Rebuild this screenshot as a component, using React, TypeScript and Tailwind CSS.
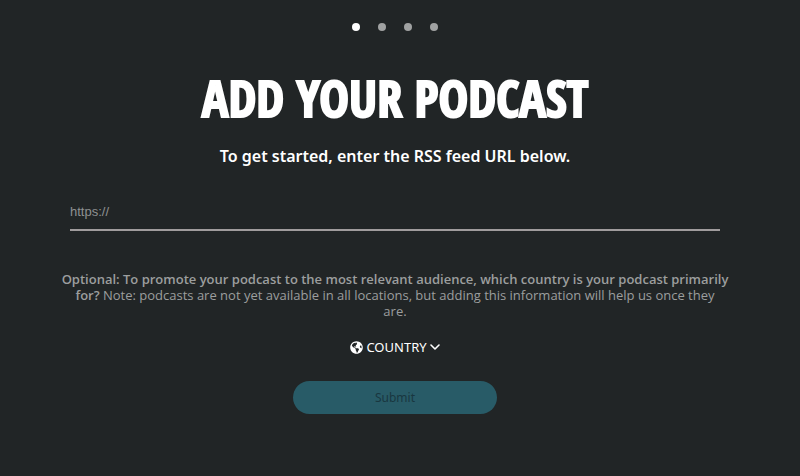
import { FaGlobeAmericas } from "react-icons/fa";

const steps = ["RSS feed", "Verify", "Details", "Finish"];

function StepDots({ current }: { current: number }) {
  return (
    <ol className="flex justify-center gap-[18px]">
      {steps.map((step, i) => (
        <li
          key={step}
          aria-label={step}
          aria-current={i === current ? "step" : undefined}
          className={i === current ? "size-2 rounded-full bg-white" : "size-2 rounded-full bg-[#a0a2a2]"}
        />
      ))}
    </ol>
  );
}

function CountrySelect() {
  return (
    <div className="flex items-center gap-[3px] text-white">
      <FaGlobeAmericas className="size-[13px]" aria-hidden="true" />
      <select
        aria-label="Country"
        className="field-sizing-content cursor-pointer appearance-none bg-transparent text-[13px] leading-5 outline-none"
      >
        <option>COUNTRY</option>
      </select>
      <svg viewBox="0 0 10 10" className="size-[10px]" fill="none" stroke="currentColor" strokeWidth="1.6" aria-hidden="true">
        <path d="M1 3l4 4 4-4" strokeLinecap="round" strokeLinejoin="round" />
      </svg>
    </div>
  );
}

export default function App() {
  return (
    <main className="min-h-screen bg-[#212526] pt-[23px] pr-20 pb-8 pl-[70px] font-['Noto_Sans',sans-serif] text-white">
      <StepDots current={0} />
      <form className="flex flex-col items-center text-center" onSubmit={(e) => e.preventDefault()}>
        <h1 className="mt-[35px] font-['Open_Sans_Condensed','Roboto_Condensed',sans-serif] text-[50px] leading-16 font-bold whitespace-nowrap [-webkit-text-stroke:2px_white]">
          ADD YOUR PODCAST
        </h1>
        <label htmlFor="feed" className="mt-[14px] text-base leading-6 font-semibold">
          To get started, enter the RSS feed URL below.
        </label>
        <input
          id="feed"
          type="url"
          placeholder="https://"
          className="mt-[25px] h-[38px] w-full border-b-2 border-[#a09c9d] bg-transparent font-['Liberation_Sans',sans-serif] text-[13px] outline-none placeholder:text-[#8f9192]"
        />
        <p className="-mx-3 mt-10 font-['Open_Sans','Noto_Sans',sans-serif] text-[13px] leading-4 text-[#9c9e9e]">
          <strong className="font-semibold">
            Optional: To promote your podcast to the most relevant audience, which country is your podcast primarily
            <br className="hidden sm:inline" /> for?
          </strong>{" "}
          Note: podcasts are not yet available in all locations, but adding this information will help us once they
          <br className="hidden sm:inline" /> are.
        </p>
        <div className="mt-[18px]">
          <CountrySelect />
        </div>
        <button type="submit" className="mt-6 h-[33px] w-51 rounded-full bg-[#285b67] text-[12px] text-[#193740]">
          Submit
        </button>
      </form>
    </main>
  );
}
